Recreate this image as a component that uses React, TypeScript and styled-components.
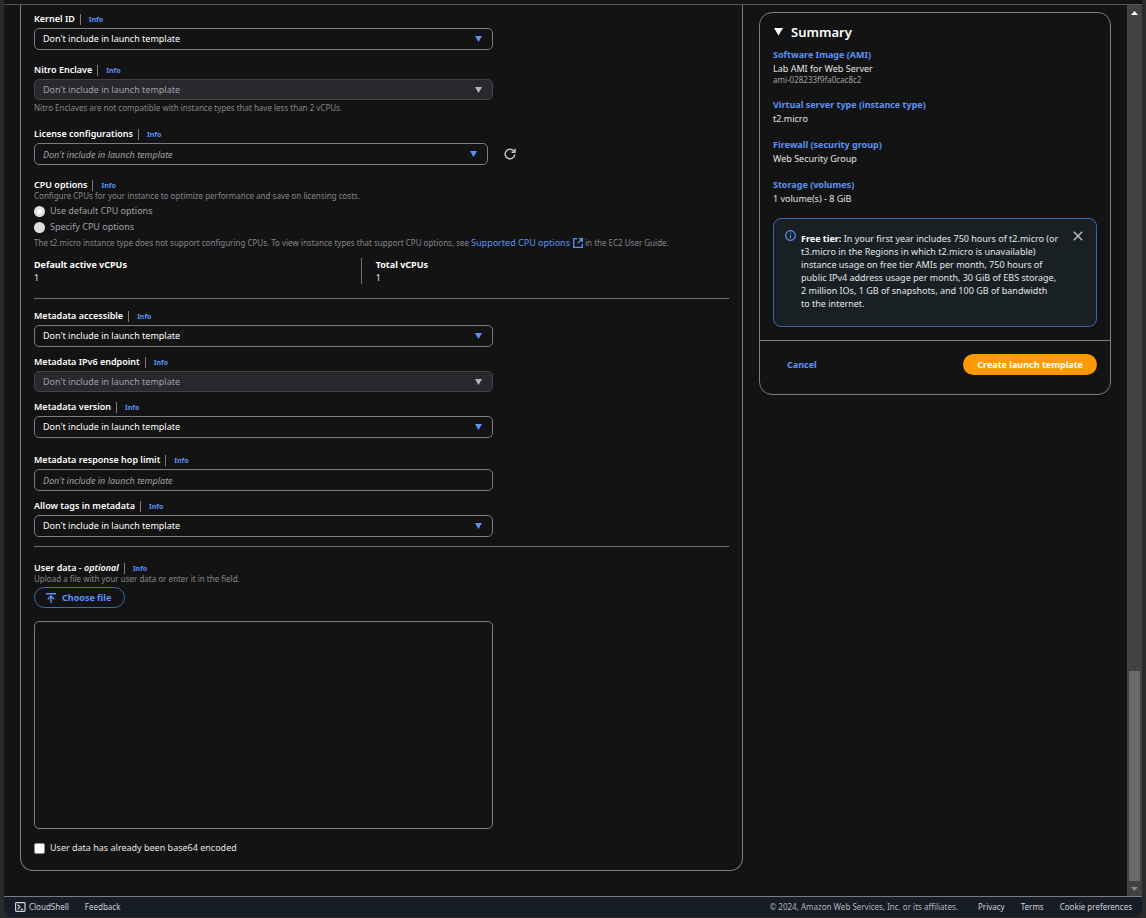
import React from "react";
import styled, { createGlobalStyle, css } from "styled-components";

const color = {
  frame: "#2b2a2a",
  page: "#131313",
  line: "#7b7b80",
  rule: "#6f6f72",
  text: "#ffffff",
  body: "#e4e4e7",
  muted: "#85868c",
  dim: "#a0a0a6",
  link: "#5b93f5",
  orange: "#ff9900",
};

const GlobalStyle = createGlobalStyle`
  *, *::before, *::after { box-sizing: border-box; }
  body { margin: 0; background: ${color.frame}; }
  body, button, input, select, textarea {
    font-family: "Noto Sans", "Open Sans", sans-serif;
    font-size: 9px;
    line-height: 14px;
  }
  h2, p, dl, dd, dt, fieldset, legend { margin: 0; padding: 0; border: 0; }
  svg { display: block; flex: none; }
`;

const Shell = styled.div`
  min-height: 100vh;
  display: flex;
  flex-direction: column;
  padding: 0 4px 1px;
  color: ${color.body};
`;

const TopEdge = styled.div`
  height: 5px;
  background: ${color.page};
  border-bottom: 1px solid #555555;
`;

const Viewport = styled.div`
  flex: 1;
  display: flex;
  background: ${color.page};
`;

const Content = styled.main`
  flex: 1;
  min-width: 0;
  display: grid;
  grid-template-columns: minmax(0, 1fr) 352px;
  gap: 16px;
  align-items: start;
  padding: 0 16px 24px;
`;

const FormPanel = styled.form`
  border: 1px solid ${color.line};
  border-top: 0;
  border-radius: 0 0 13px 13px;
  padding: 8px 13px 14px;
`;

const Stack = styled.div<{ $gap: number }>`
  display: flex;
  flex-direction: column;
  gap: ${(p) => p.$gap}px;
`;

const FieldBox = styled.div`
  display: flex;
  flex-direction: column;
`;

const LabelRow = styled.div<{ $tight?: boolean }>`
  display: flex;
  align-items: center;
  height: 12px;
  margin-bottom: ${(p) => (p.$tight ? 0 : 3)}px;
`;

const Label = styled.label`
  color: ${color.text};
  font-size: 9px;
  font-weight: 600;
  line-height: 12px;
`;

const InfoLink = styled.a`
  margin-left: 5px;
  padding-left: 8px;
  border-left: 1px solid ${color.line};
  color: ${color.link};
  font-size: 7px;
  font-weight: 700;
  line-height: 11px;
  text-decoration: none;
`;

const ControlWrap = styled.div<{ $short?: boolean }>`
  position: relative;
  width: ${(p) => (p.$short ? "calc(66% - 5px)" : "66%")};
`;

const controlStyle = css`
  display: block;
  width: 100%;
  height: 22px;
  margin: 0;
  padding: 0 8px;
  border: 1px solid ${color.line};
  border-radius: 5px;
  outline: 0;
  background: transparent;
  color: ${color.text};
`;

const Select = styled.select`
  ${controlStyle}
  appearance: none;
  &:disabled {
    height: 21px;
    background: #29282d;
    border-color: #424247;
    color: ${color.dim};
    opacity: 1;
  }
`;

const TextInput = styled.input`
  ${controlStyle}
  &::placeholder {
    color: ${color.dim};
    font-style: italic;
    opacity: 1;
  }
`;

const Caret = styled.svg<{ $off?: boolean }>`
  position: absolute;
  right: 11px;
  top: 8px;
  pointer-events: none;
  fill: ${(p) => (p.$off ? "#b4b4bb" : color.link)};
`;

const Hint = styled.p<{ $line?: number }>`
  color: ${color.muted};
  font-size: 8px;
  line-height: ${(p) => p.$line ?? 10}px;
`;

const FieldHint = styled(Hint)`
  margin-top: 2px;
`;

const ControlRow = styled.div`
  display: flex;
  align-items: center;
  gap: 12px;
`;

const IconButton = styled.button`
  display: flex;
  align-items: center;
  justify-content: center;
  width: 20px;
  height: 20px;
  padding: 0;
  border: 0;
  background: none;
  color: #c6c6cd;
`;

const Choices = styled.div`
  display: flex;
  flex-direction: column;
  padding: 2px 0 1px;
`;

const Choice = styled.label<{ $muted?: boolean }>`
  display: flex;
  align-items: center;
  gap: 5px;
  height: 16px;
  color: ${(p) => (p.$muted ? color.dim : color.body)};
`;

const Radio = styled.input`
  appearance: none;
  width: 11px;
  height: 11px;
  margin: 0;
  border-radius: 50%;
  background: #dedee3;
  &:checked {
    background: radial-gradient(circle, #ffffff 2px, #dedee3 3px);
  }
`;

const Checkbox = styled.input`
  appearance: none;
  width: 11px;
  height: 11px;
  margin: 0;
  border: 1px solid #8c8c94;
  border-radius: 2px;
  background: #ffffff;
`;

const DocLink = styled.a`
  display: inline-flex;
  align-items: center;
  gap: 3px;
  vertical-align: bottom;
  color: ${color.link};
  font-size: 9px;
  line-height: 14px;
  text-decoration: none;
`;

const Facts = styled.dl`
  display: grid;
  grid-template-columns: 47% 1fr;
  margin-top: 8px;
`;

const Fact = styled.div`
  line-height: 13px;
  & + & {
    padding-left: 14px;
    border-left: 1px solid ${color.rule};
  }
  dt {
    color: ${color.text};
    font-weight: 700;
  }
`;

const Rule = styled.hr<{ $above: number; $below: number }>`
  height: 1px;
  margin: ${(p) => p.$above}px 0 ${(p) => p.$below}px;
  border: 0;
  background: ${color.rule};
`;

const FileButton = styled.button`
  display: inline-flex;
  align-items: center;
  align-self: flex-start;
  gap: 6px;
  height: 21px;
  margin: 3px 0 13px;
  padding: 0 13px 0 11px;
  border: 1px solid #3e6ab8;
  border-radius: 11px;
  background: none;
  color: ${color.link};
  font-weight: 700;
`;

const Script = styled.textarea`
  ${controlStyle}
  width: 66%;
  height: 208px;
  margin-bottom: 11px;
  padding: 8px;
  resize: none;
`;

const SummaryPanel = styled.aside`
  margin-top: 7px;
  border: 1px solid ${color.line};
  border-radius: 13px;
`;

const SummaryBody = styled.div`
  padding: 11px 13px 13px;
`;

const SummaryTitle = styled.h2`
  display: flex;
  align-items: center;
  gap: 7px;
  margin-bottom: 8px;
  color: ${color.text};
  font-size: 13px;
  font-weight: 600;
  line-height: 16px;
`;

const SummaryItem = styled.div`
  margin-bottom: 12px;
  a {
    display: block;
    color: ${color.link};
    font-weight: 700;
    text-decoration: none;
  }
`;

const ImageId = styled.div`
  padding-bottom: 2px;
  color: ${color.dim};
  font-size: 8px;
  line-height: 8px;
`;

const Notice = styled.section`
  display: flex;
  align-items: flex-start;
  gap: 5px;
  padding: 11px 11px 16px;
  border: 1px solid #3b64b0;
  border-radius: 8px;
  background: #192024;
  p {
    flex: 1;
    padding: 2px 6px 0 0;
    line-height: 13px;
  }
  strong {
    color: ${color.text};
  }
`;

const CloseButton = styled(IconButton)`
  width: 14px;
  height: 11px;
`;

const SummaryActions = styled.div`
  display: flex;
  align-items: center;
  justify-content: space-between;
  padding: 13px 13px 19px 27px;
  border-top: 1px solid ${color.line};
`;

const LinkButton = styled.button`
  padding: 0;
  border: 0;
  background: none;
  color: ${color.link};
  font-weight: 700;
`;

const PrimaryButton = styled.button`
  height: 21px;
  padding: 0 14px;
  border: 0;
  border-radius: 11px;
  background: ${color.orange};
  color: #ffffff;
  font-weight: 700;
`;

const ScrollBar = styled.div`
  display: flex;
  flex-direction: column;
  align-items: center;
  width: 15px;
  background: #424242;
`;

const ScrollArrow = styled.div`
  display: flex;
  align-items: center;
  justify-content: center;
  height: 15px;
`;

const ScrollTrack = styled.div`
  flex: 1;
  display: flex;
  flex-direction: column;
  justify-content: flex-end;
`;

const ScrollThumb = styled.div`
  width: 11px;
  height: 24.4%;
  background: #6a6a6a;
`;

const FooterBar = styled.footer`
  display: flex;
  align-items: center;
  justify-content: space-between;
  height: 21px;
  padding: 0 10px 1px 11px;
  border-top: 1px solid ${color.line};
  border-radius: 0 0 8px 8px;
  background: #161d26;
  color: #b4b4bb;
  font-size: 8px;
  line-height: 12px;
`;

const FooterGroup = styled.nav`
  display: flex;
  align-items: center;
  gap: 16px;
`;

const FooterLink = styled.a`
  display: flex;
  align-items: center;
  gap: 3px;
  color: #d0d0d6;
  text-decoration: none;
`;

const Copyright = styled.span`
  margin-right: 4px;
`;

function Info() {
  return <InfoLink href="#info">Info</InfoLink>;
}

function FieldLabel({ id, children }: { id: string; children: React.ReactNode }) {
  return (
    <LabelRow>
      <Label htmlFor={id}>{children}</Label>
      <Info />
    </LabelRow>
  );
}

function CaretIcon({ off }: { off?: boolean }) {
  return (
    <Caret $off={off} width="7" height="6" viewBox="0 0 7 6" aria-hidden="true">
      <path d="M0 0h7L3.5 6z" />
    </Caret>
  );
}

const PLACEHOLDER = "Don't include in launch template";

function SelectField({ id, label, disabled, hint }: { id: string; label: string; disabled?: boolean; hint?: string }) {
  return (
    <FieldBox>
      <FieldLabel id={id}>{label}</FieldLabel>
      <ControlWrap>
        <Select id={id} disabled={disabled}>
          <option>{PLACEHOLDER}</option>
        </Select>
        <CaretIcon off={disabled} />
      </ControlWrap>
      {hint && <FieldHint $line={12}>{hint}</FieldHint>}
    </FieldBox>
  );
}

export default function App() {
  return (
    <>
      <GlobalStyle />
      <Shell>
        <TopEdge />
        <Viewport>
          <Content>
            <FormPanel>
              <Stack $gap={14}>
                <SelectField id="kernel" label="Kernel ID" />
                <SelectField
                  id="nitro"
                  label="Nitro Enclave"
                  disabled
                  hint="Nitro Enclaves are not compatible with instance types that have less than 2 vCPUs."
                />
                <FieldBox>
                  <FieldLabel id="license">License configurations</FieldLabel>
                  <ControlRow>
                    <ControlWrap $short>
                      <TextInput id="license" placeholder={PLACEHOLDER} />
                      <CaretIcon />
                    </ControlWrap>
                    <IconButton type="button" aria-label="Refresh">
                      <svg width="12" height="12" viewBox="0 0 12 12" fill="none" stroke="currentColor" strokeWidth="1.4">
                        <path d="M10.8 6.4A4.8 4.8 0 1 1 9.6 2.8L11 4.2" />
                        <path d="M11 .8v3.5H7.5" />
                      </svg>
                    </IconButton>
                  </ControlRow>
                </FieldBox>
                <FieldBox as="fieldset">
                  <LabelRow $tight>
                    <Label as="span">CPU options</Label>
                    <Info />
                  </LabelRow>
                  <Hint>Configure CPUs for your instance to optimize performance and save on licensing costs.</Hint>
                  <Choices>
                    <Choice $muted>
                      <Radio type="radio" name="cpu" defaultChecked />
                      Use default CPU options
                    </Choice>
                    <Choice $muted>
                      <Radio type="radio" name="cpu" />
                      Specify CPU options
                    </Choice>
                  </Choices>
                  <Hint $line={14}>
                    The t2.micro instance type does not support configuring CPUs. To view instance types that support CPU
                    options, see{" "}
                    <DocLink href="#cpu-options">
                      Supported CPU options
                      <svg width="10" height="10" viewBox="0 0 10 10" fill="none" stroke="currentColor" strokeWidth="1.3">
                        <path d="M4 .7H.7v8.6h8.6V6M5.8.7h3.5v3.5M9.3.7 4.6 5.4" />
                      </svg>
                    </DocLink>{" "}
                    in the EC2 User Guide.
                  </Hint>
                  <Facts>
                    <Fact>
                      <dt>Default active vCPUs</dt>
                      <dd>1</dd>
                    </Fact>
                    <Fact>
                      <dt>Total vCPUs</dt>
                      <dd>1</dd>
                    </Fact>
                  </Facts>
                </FieldBox>
              </Stack>
              <Rule $above={14} $below={11} />
              <Stack $gap={16}>
                <Stack $gap={9}>
                  <SelectField id="meta-access" label="Metadata accessible" />
                  <SelectField id="meta-ipv6" label="Metadata IPv6 endpoint" disabled />
                  <SelectField id="meta-version" label="Metadata version" />
                </Stack>
                <Stack $gap={9}>
                  <FieldBox>
                    <FieldLabel id="hops">Metadata response hop limit</FieldLabel>
                    <ControlWrap>
                      <TextInput id="hops" placeholder={PLACEHOLDER} />
                    </ControlWrap>
                  </FieldBox>
                  <SelectField id="meta-tags" label="Allow tags in metadata" />
                </Stack>
              </Stack>
              <Rule $above={9} $below={15} />
              <FieldBox>
                <LabelRow $tight>
                  <Label htmlFor="user-data">
                    User data - <em>optional</em>
                  </Label>
                  <Info />
                </LabelRow>
                <Hint>Upload a file with your user data or enter it in the field.</Hint>
                <FileButton type="button">
                  <svg width="10" height="10" viewBox="0 0 10 10" fill="none" stroke="currentColor" strokeWidth="1.4">
                    <path d="M0 .7h10M5 10V3.2M1.8 6.2 5 3l3.2 3.2" />
                  </svg>
                  Choose file
                </FileButton>
                <Script id="user-data" />
                <Choice>
                  <Checkbox type="checkbox" />
                  User data has already been base64 encoded
                </Choice>
              </FieldBox>
            </FormPanel>

            <SummaryPanel>
              <SummaryBody>
                <SummaryTitle>
                  <svg width="11" height="8" viewBox="0 0 11 8" fill="currentColor" aria-hidden="true">
                    <path d="M1 0h9L5.5 7.5z" />
                  </svg>
                  Summary
                </SummaryTitle>
                <SummaryItem>
                  <a href="#ami">Software Image (AMI)</a>
                  <p>Lab AMI for Web Server</p>
                  <ImageId>ami-028233f9fa0cac8c2</ImageId>
                </SummaryItem>
                <SummaryItem>
                  <a href="#type">Virtual server type (instance type)</a>
                  <p>t2.micro</p>
                </SummaryItem>
                <SummaryItem>
                  <a href="#firewall">Firewall (security group)</a>
                  <p>Web Security Group</p>
                </SummaryItem>
                <SummaryItem>
                  <a href="#storage">Storage (volumes)</a>
                  <p>1 volume(s) - 8 GiB</p>
                </SummaryItem>
                <Notice>
                  <svg width="11" height="11" viewBox="0 0 11 11" fill="none" stroke={color.link} strokeWidth="1.2" aria-hidden="true">
                    <circle cx="5.5" cy="5.5" r="4.8" />
                    <path d="M5.5 5v3.2M5.5 2.8V4" />
                  </svg>
                  <p>
                    <strong>Free tier:</strong> In your first year includes 750 hours of t2.micro (or t3.micro in the
                    Regions in which t2.micro is unavailable) instance usage on free tier AMIs per month, 750 hours of
                    public IPv4 address usage per month, 30 GiB of EBS storage, 2 million IOs, 1 GB of snapshots, and
                    100 GB of bandwidth to{"\u00a0"}the internet.
                  </p>
                  <CloseButton type="button" aria-label="Dismiss">
                    <svg width="10" height="10" viewBox="0 0 10 10" fill="none" stroke="currentColor" strokeWidth="1.3">
                      <path d="M.8.8l8.4 8.4M9.2.8.8 9.2" />
                    </svg>
                  </CloseButton>
                </Notice>
              </SummaryBody>
              <SummaryActions>
                <LinkButton type="button">Cancel</LinkButton>
                <PrimaryButton type="button">Create launch template</PrimaryButton>
              </SummaryActions>
            </SummaryPanel>
          </Content>
          <ScrollBar aria-hidden="true">
            <ScrollArrow>
              <svg width="7" height="4" viewBox="0 0 7 4" fill="#ffffff">
                <path d="M0 4h7L3.5 0z" />
              </svg>
            </ScrollArrow>
            <ScrollTrack>
              <ScrollThumb />
            </ScrollTrack>
            <ScrollArrow>
              <svg width="7" height="4" viewBox="0 0 7 4" fill="#8a8a8a">
                <path d="M0 0h7L3.5 4z" />
              </svg>
            </ScrollArrow>
          </ScrollBar>
        </Viewport>
        <FooterBar>
          <FooterGroup>
            <FooterLink href="#cloudshell">
              <svg width="11" height="10" viewBox="0 0 11 10" fill="none" stroke="currentColor" strokeWidth="1.2">
                <rect x=".6" y=".6" width="9.4" height="8.8" rx=".8" />
                <path d="M2.6 2.6 5 5 2.6 7.4M5.8 7.4h2.4" />
              </svg>
              CloudShell
            </FooterLink>
            <FooterLink href="#feedback">Feedback</FooterLink>
          </FooterGroup>
          <FooterGroup>
            <Copyright>© 2024, Amazon Web Services, Inc. or its affiliates.</Copyright>
            <FooterLink href="#privacy">Privacy</FooterLink>
            <FooterLink href="#terms">Terms</FooterLink>
            <FooterLink href="#cookies">Cookie preferences</FooterLink>
          </FooterGroup>
        </FooterBar>
      </Shell>
    </>
  );
}
